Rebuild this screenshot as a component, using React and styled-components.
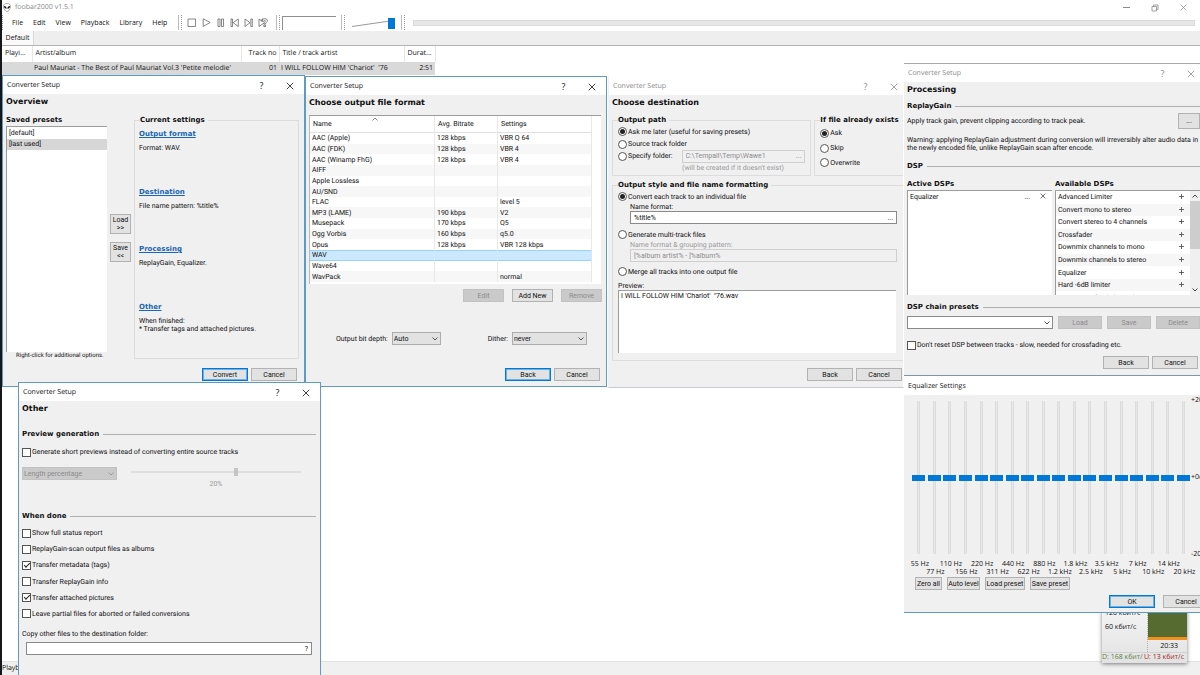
import React from "react";
import styled, { createGlobalStyle, css } from "styled-components";

const ui = '"Open Sans", "Noto Sans", sans-serif';
const dialog = 'Roboto, "Liberation Sans", sans-serif';
const strong = '"DejaVu Sans", "Open Sans", sans-serif';

const face = "#f0f0f0";
const blue = "#0078d7";

const GlobalStyle = createGlobalStyle`
  *, *::before, *::after { box-sizing: border-box; }
  html, body { margin: 0; height: 100%; overflow: hidden; background: #fff; }
  body { font: 7px/8px ${dialog}; color: #111; text-rendering: geometricPrecision; }
  button, input, select, textarea { font: inherit; color: inherit; margin: 0; border-radius: 0; }
  fieldset, ul, h1, h2, p { margin: 0; padding: 0; }
  ul { list-style: none; }
`;

/* ---------- desktop and player window ---------- */

const Desktop = styled.div`
  position: relative;
  height: 100vh;
  overflow: hidden;
`;

const Player = styled.main`
  height: 100%;
  display: flex;
  flex-direction: column;
  border-left: 2px solid #14171c;
  font-family: ${ui};
`;

const PlayerTitle = styled.header`
  display: flex;
  align-items: center;
  height: 14px;
  padding: 1px 12px 0 1px;
  gap: 4px;
  color: #8a8a8a;
`;

const Spacer = styled.span`
  flex: 1;
`;

const CaptionButtons = styled.div`
  display: flex;
  gap: 20px;
`;

const CaptionButton = styled.button`
  display: flex;
  align-items: center;
  justify-content: center;
  width: 9px;
  height: 9px;
  padding: 0;
  border: 0;
  background: none;
  font-family: ${ui};
  font-size: 9px;
  color: ${(p) => (p.$dim ? "#8a8a8a" : "#111")};
`;

const ToolRow = styled.div`
  display: flex;
  align-items: center;
  height: 17px;
`;

const Grip = styled.span`
  width: ${(p) => (p.$double ? "4px" : "1px")};
  height: 15px;
  border-right: 1px dotted #9a9a9a;
  border-left: ${(p) => (p.$double ? "1px solid #bdbdbd" : "0")};
`;

const Menu = styled.nav`
  display: flex;
  gap: 10px;
  width: 175px;
  padding-left: 9px;
`;

const MenuItem = styled.button`
  padding: 0;
  border: 0;
  background: none;
`;

const Transport = styled.div`
  display: flex;
  gap: 5px;
  width: 94px;
  padding-left: 5px;
`;

const IconButton = styled.button`
  display: flex;
  padding: 0;
  border: 0;
  background: none;
`;

const SpectrumBox = styled.div`
  width: 54px;
  height: 14px;
  margin: 0 5px 0 2px;
  border-top: 1px solid #8f8f8f;
  border-left: 1px solid #8f8f8f;
`;

const VolumeBox = styled.div`
  display: flex;
  width: 56px;
  padding-left: 7px;
`;

const SeekBar = styled.div`
  flex: 1;
  height: 6px;
  margin: 0 5px 0 8px;
  background: #e7e7e7;
  border: 1px solid #dadada;
`;

const TabStrip = styled.div`
  display: flex;
  height: 15px;
  background: #eee;
  border-bottom: 1px solid #b4b4b4;
`;

const Tab = styled.button`
  width: 32px;
  padding: 0;
  border: 0;
  border-right: 1px solid #d9d9d9;
  background: #fafafa;
`;

const Playlist = styled.table`
  table-layout: fixed;
  width: 433px;
  border-collapse: collapse;
  white-space: nowrap;

  th, td {
    overflow: hidden;
    padding: 0 3px;
    font-weight: 400;
    text-align: left;
  }
  th { height: 16px; border-right: 1px solid #e6e6e6; }
  td { height: 13px; background: #d9d9d9; padding: 0 2px; }
  th:nth-child(3), td:nth-child(3), td:nth-child(5) { text-align: right; padding: 0 2px; }
`;

const StatusBar = styled.footer`
  margin-top: auto;
  height: 14px;
  line-height: 14px;
  background: ${face};
  border-top: 1px solid #e0e0e0;
`;

/* ---------- dialog parts ---------- */

const Window = styled.section`
  position: absolute;
  z-index: ${(p) => p.$z || 1};
  left: ${(p) => p.$x}px;
  top: ${(p) => p.$y}px;
  ${(p) => (p.$w ? `width: ${p.$w}px;` : "right: 0;")}
  height: ${(p) => p.$h}px;
  display: flex;
  flex-direction: column;
  overflow: hidden;
  background: ${face};
  border: 1px solid #5c9cc4;
  ${(p) => p.$frame === "none" && css`border-color: #fff #fff #c4ccd2 #eef2f4;`}
  ${(p) => p.$frame === "grey" && css`
    border-width: 1px 0 2px;
    border-color: #a8a8a8 #fff #8496a2;
  `}
  ${(p) => p.$frame === "bottom" && css`border-width: 1px 0 1px; border-top-color: #fff;`}
`;

const TitleBar = styled.header`
  display: flex;
  flex: none;
  align-items: center;
  height: 18px;
  padding: 1px ${(p) => (p.$tight ? 5 : 10)}px 0 4px;
  background: #fff;
  font-family: ${ui};
  color: ${(p) => (p.$dim ? "#8a8a8a" : "#111")};
`;

const DialogButtons = styled(CaptionButtons)`
  gap: 19px;
`;

const Body = styled.div`
  flex: 1;
  display: flex;
  flex-direction: column;
  padding: 0 ${(p) => p.$pr ?? 4}px 0 3px;
`;

const Heading = styled.h1`
  font: 700 8px/16px ${strong};
  height: ${(p) => p.$h || 18}px;
`;

const Label = styled.h2`
  font: 700 7px/10px ${strong};
`;

const RuledLabel = styled(Label)`
  display: flex;
  align-items: center;
  gap: 4px;
  white-space: nowrap;
  &::after { content: ""; flex: 1; height: 1px; background: #b0b0b0; }
`;

const Group = styled.fieldset`
  min-width: 0;
  border: 1px solid #dcdcdc;
  height: ${(p) => p.$h}px;
  padding: 0 5px;
  ${(p) => p.$w && `width: ${p.$w}px;`}
  ${(p) => p.$open && "border-right: 0;"}
`;

const Legend = styled.legend`
  padding: 0 3px 0 0;
  font: 700 7px/10px ${strong};
  white-space: nowrap;
`;

const Row = styled.div`
  display: flex;
  align-items: ${(p) => p.$align || "center"};
  justify-content: ${(p) => p.$justify || "flex-start"};
  gap: ${(p) => p.$gap || 0}px;
  ${(p) => p.$h && `height: ${p.$h}px;`}
  padding-left: ${(p) => p.$pl || 0}px;
  padding-right: ${(p) => p.$pr || 0}px;
`;

const Column = styled.div`
  display: flex;
  flex-direction: column;
  min-width: 0;
  ${(p) => (p.$w ? `width: ${p.$w}px;` : "flex: 1;")}
  padding-top: ${(p) => p.$pt || 0}px;
`;

const Button = styled.button`
  flex: none;
  width: ${(p) => p.$w || 46}px;
  height: ${(p) => p.$h || 13}px;
  padding: 0;
  background: #e2e2e2;
  border: 1px solid #b2b2b2;
  white-space: nowrap;
  ${(p) => p.$primary && css`border-color: ${blue}; box-shadow: inset 0 0 0 1px #6fb0e4;`}
  &:disabled { background: #cacaca; border-color: #c2c2c2; color: #8b8b8b; }
`;

const Footer = styled.footer`
  display: flex;
  justify-content: flex-end;
  gap: 3px;
  margin-top: auto;
  padding: 0 ${(p) => p.$pr || 0}px ${(p) => p.$pb ?? 5}px 0;
`;

const ListBox = styled.ul`
  flex: none;
  height: ${(p) => p.$h}px;
  padding: 1px 0;
  overflow: hidden;
  background: #fff;
  border-top: 1px solid #9c9c9c;
  border-left: 1px solid #9c9c9c;
`;

const ListItem = styled.li`
  height: 11px;
  padding: 0 2px;
  line-height: 11px;
  background: ${(p) => (p.$selected ? "#d6d6d6" : "transparent")};
`;

const Note = styled.p`
  line-height: ${(p) => p.$lh || 8}px;
  color: ${(p) => (p.$dim ? "#9a9a9a" : "inherit")};
  text-align: ${(p) => p.$align || "left"};
  padding-left: ${(p) => p.$pl || 0}px;
  white-space: nowrap;
`;

const SmallNote = styled(Note)`
  font-size: 6px;
`;

const Setting = styled.div`
  flex: 1;
  a { display: block; font: 700 7px/10px ${strong}; color: #1a66b0; margin-bottom: 5px; }
`;

const SettingList = styled.div`
  display: flex;
  flex-direction: column;
  height: 234px;
  padding-top: 4px;
  margin-left: -1px;
`;

const Option = styled.label`
  display: flex;
  align-items: center;
  gap: 1px;
  height: ${(p) => p.$h || 12}px;
  white-space: nowrap;
`;

const Tick = styled.input`
  appearance: none;
  flex: none;
  display: grid;
  place-items: center;
  width: 9px;
  height: 9px;
  background: #fff;
  border: 1px solid #555;
  &[type="radio"] { border-radius: 50%; }
  &[type="radio"]:checked::before {
    content: "";
    width: 5px;
    height: 5px;
    border-radius: 50%;
    background: #222;
  }
  &[type="checkbox"]:checked::before {
    content: "";
    width: 6px;
    height: 3px;
    margin-bottom: 2px;
    border: solid #222;
    border-width: 0 0 1px 1px;
    transform: rotate(-45deg);
  }
`;

const Field = styled.div`
  display: flex;
  align-items: center;
  height: ${(p) => p.$h || 13}px;
  width: ${(p) => (p.$w ? `${p.$w}px` : "auto")};
  margin: 0 ${(p) => p.$mr || 0}px 0 ${(p) => p.$ml || 0}px;
  padding: 0 3px;
  background: ${(p) => (p.$dim ? face : "#fff")};
  border: 1px solid ${(p) => (p.$dim ? "#cfcfcf" : "#8a8a8a")};
  color: ${(p) => (p.$dim ? "#8b8b8b" : "inherit")};
`;

const TextInput = styled.input`
  flex: 1;
  min-width: 0;
  height: 9px;
  padding: 0;
  border: 0;
  outline: 0;
  background: none;
`;

const PlainButton = styled.button`
  padding: 0;
  border: 0;
  background: none;
`;

const PreviewText = styled.textarea`
  display: block;
  width: 278px;
  height: 63px;
  padding: 1px 2px;
  resize: none;
  outline: 0;
  background: #fff;
  border: 0;
  border-top: 1px solid #9c9c9c;
  border-left: 1px solid #9c9c9c;
`;

const SelectBox = styled.span`
  display: grid;
  flex: none;
  align-items: center;
  width: ${(p) => p.$w}px;
  height: 13px;
  background: ${(p) => p.$fill || "#e2e2e2"};
  border: 1px solid ${(p) => p.$edge || "#adadad"};
  color: ${(p) => (p.$dim ? "#8b8b8b" : "inherit")};

  select, svg { grid-area: 1 / 1; }
  select {
    appearance: none;
    width: 100%;
    height: 11px;
    padding: 0 1px;
    border: 0;
    background: none;
    opacity: 1;
  }
  svg { justify-self: end; margin-right: 2px; pointer-events: none; }
`;

const FormatBox = styled.div`
  height: 169px;
  width: 292px;
  background: #fff;
  border-top: 1px solid #9c9c9c;
  border-left: 1px solid #b8b8b8;
`;

const FormatTable = styled.table`
  table-layout: fixed;
  width: 282px;
  height: 166px;
  border-collapse: separate;
  border-spacing: 0;

  th, td {
    padding: 0 2px;
    font-weight: 400;
    text-align: left;
    border-right: 1px solid #e8e8e8;
    white-space: nowrap;
    overflow: hidden;
  }
  th { position: relative; height: 17px; padding: 0 3px; border-bottom: 1px solid #e0e0e0; }
  th svg { position: absolute; top: 1px; left: 50%; }
  tbody tr:nth-child(even) td { background: #f7f7f7; }
  tbody tr[aria-selected="true"] td {
    background: #cce8ff;
    box-shadow: inset 0 1px #99d1ff, inset 0 -1px #99d1ff;
    border-right-color: #cce8ff;
  }
`;

const DspBox = styled.div`
  display: flex;
  height: 105px;
  overflow: hidden;
  background: #fff;
  border-top: 1px solid #9c9c9c;
  border-left: 1px solid #9c9c9c;
`;

const DspItems = styled.ul`
  flex: 1;
  display: grid;
  grid-template-rows: repeat(9, 1fr);
  height: 113px;
  li {
    display: flex;
    align-items: center;
    justify-content: space-between;
    padding: 0 6px 0 2px;
  }
  li:nth-child(even) { background: #f6f6f6; }
`;

const ScrollBar = styled.div`
  display: flex;
  flex-direction: column;
  align-items: center;
  width: 10px;
  background: ${face};
  svg { flex: none; margin: 3px 0; }
`;

const ScrollThumb = styled.div`
  width: 100%;
  height: 48px;
  background: #cdcdcd;
`;

const Track = styled.input`
  appearance: none;
  display: block;
  width: 170px;
  height: 8px;
  background: none;
  &::-webkit-slider-runnable-track { height: 2px; background: #dedede; }
  &::-webkit-slider-thumb {
    appearance: none;
    width: 4px;
    height: 8px;
    margin-top: -3px;
    background: #c4c4c4;
  }
`;

const Bands = styled.div`
  display: flex;
  width: 280px;
`;

const Band = styled.label`
  flex: 1;
  min-width: 0;
  display: flex;
  flex-direction: column;
  align-items: center;
  font-family: ${ui};
  white-space: nowrap;
  span { padding-top: ${(p) => (p.$low ? 15 : 7)}px; height: 23px; padding-left: 2px; }
`;

const BandSlider = styled.input`
  appearance: none;
  writing-mode: vertical-lr;
  direction: rtl;
  width: 13px;
  height: 153px;
  background: none;
  &::-webkit-slider-runnable-track {
    width: 3px;
    background: #e7e7e7;
    border: solid #dcdcdc;
    border-width: 0 1px;
  }
  &::-webkit-slider-thumb {
    appearance: none;
    width: 13px;
    height: 6px;
    margin-left: -6px;
    background: ${blue};
  }
`;

const Scale = styled.div`
  display: flex;
  flex-direction: column;
  justify-content: space-between;
  height: 162px;
  margin-top: -4px;
  font-family: ${ui};
  white-space: nowrap;
`;

const Traffic = styled.aside`
  position: absolute;
  left: 1102px;
  top: 608px;
  width: 85px;
  display: grid;
  grid-template-columns: 45px 40px;
  background: linear-gradient(#f4f4f4, #e2e2e2);
  box-shadow: 0 1px 4px rgba(0, 0, 0, 0.5);
  font-family: ${ui};
`;

const TrafficScale = styled.div`
  display: flex;
  flex-direction: column;
  gap: 6px;
  padding: 2px 0 0 3px;
  height: 44px;
  white-space: nowrap;
`;

const TrafficGraph = styled.div`
  height: 44px;
  text-align: right;
  padding-right: 9px;
  line-height: 13px;
  border-left: 1px dotted #b0b0b0;
  &::before {
    content: "";
    display: block;
    height: 32px;
    margin-right: -9px;
    background: #556b2f;
    border-bottom: 3px solid #f09020;
  }
`;

const TrafficTotals = styled.div`
  grid-column: 1 / 3;
  display: flex;
  gap: 1px;
  height: 11px;
  line-height: 10px;
  overflow: hidden;
  white-space: nowrap;
  border-top: 1px solid #d0d0d0;
  span { color: #5f7f45; width: 41px; overflow: hidden; }
  span + span { color: #9c1c1c; }
`;

/* ---------- drawings ---------- */

const Chevron = ({ color = "#555" }) => (
  <svg width="6" height="4" viewBox="0 0 6 4" fill="none" stroke={color}>
    <path d="M0.5 0.5L3 3L5.5 0.5" />
  </svg>
);

const ChevronUp = ({ color = "#444" }) => (
  <svg width="6" height="4" viewBox="0 0 6 4" fill="none" stroke={color}>
    <path d="M0.5 3.5L3 1L5.5 3.5" />
  </svg>
);

const Cross = ({ size = 8 }) => (
  <svg width={size} height={size} viewBox="0 0 8 8" fill="none" stroke="currentColor" strokeWidth="0.8">
    <path d="M0.8 0.8L7.2 7.2M7.2 0.8L0.8 7.2" />
  </svg>
);

const Alien = () => (
  <svg width="8" height="9" viewBox="0 0 8 9">
    <path d="M4 0.4C6.3 0.4 7.7 1.6 7.6 3.6C7.5 5.8 5.6 8.6 4 8.6S0.5 5.8 0.4 3.6C0.3 1.6 1.7 0.4 4 0.4Z" fill="#fff" stroke="#777" strokeWidth="0.6" />
    <path d="M0.9 3C2.6 3 3.6 4 3.6 5.7C2 5.7 1 4.8 0.9 3ZM7.1 3C5.4 3 4.4 4 4.4 5.7C6 5.7 7 4.8 7.1 3Z" fill="#111" />
  </svg>
);

const transport = [
  ["Stop", 10, <path d="M1 1H8.5V8.5H1Z" />],
  ["Play", 9, <path d="M1.2 0.8L8.2 4.5L1.2 8.4Z" />],
  ["Pause", 9, <path d="M2 1H4V8.5H2ZM5.5 1H7.5V8.5H5.5Z" />],
  ["Previous", 9, <path d="M1 1H2.5V8.5H1ZM8.3 1V8.5L3.2 4.7Z" />],
  ["Next", 9, <path d="M6.8 1H8.3V8.5H6.8ZM1 1V8.5L6 4.7Z" />],
  ["Random", 11, <path d="M1 1L4 3.3V1H5M1 1V8.5L6 5M4 3.3C4 1.4 5 0.7 6.7 0.7C8.6 0.7 9.6 1.6 9.4 3C9.2 4.2 7.6 4.6 7.5 6H5.8C5.8 4.5 7.4 3.8 7.3 2.9C7.2 2.2 5.9 2.3 5.8 3.3ZM5.8 7H7.5V8.6H5.8Z" />],
];

/* ---------- composed controls ---------- */

const DialogTitle = ({ children, dim, tight }) => (
  <TitleBar $dim={dim} $tight={tight}>
    {children}
    <Spacer />
    <DialogButtons>
      <CaptionButton $dim={dim} aria-label="Help">?</CaptionButton>
      <CaptionButton $dim={dim} aria-label="Close"><Cross /></CaptionButton>
    </DialogButtons>
  </TitleBar>
);

const Choice = ({ type = "checkbox", name, checked, h, children }) => (
  <Option $h={h}>
    <Tick type={type} name={name} defaultChecked={checked} />
    {children}
  </Option>
);

const Select = ({ label, value, w, fill, edge, dim }) => (
  <SelectBox $w={w} $fill={fill} $edge={edge} $dim={dim}>
    <select aria-label={label} defaultValue={value} disabled={dim}>
      <option>{value}</option>
    </select>
    <Chevron color={dim ? "#9a9a9a" : "#555"} />
  </SelectBox>
);

const Pad = styled.div`
  flex: none;
  height: ${(p) => p.$h}px;
`;

/* ---------- dialogs ---------- */

const settings = [
  ["Output format", ["Format: WAV."]],
  ["Destination", ["File name pattern: %title%"]],
  ["Processing", ["ReplayGain, Equalizer."]],
  ["Other", ["When finished:", "* Transfer tags and attached pictures."]],
];

const OverviewDialog = () => (
  <Window $x={2} $y={75} $w={303} $h={312}>
    <DialogTitle>Converter Setup</DialogTitle>
    <Body $pr={5}>
      <Heading $h={21}>Overview</Heading>
      <Row $align="flex-start" $h={246}>
        <Column $w={101}>
          <Label>Saved presets</Label>
          <Pad $h={1} />
          <ListBox $h={226}>
            <ListItem>[default]</ListItem>
            <ListItem $selected>[last used]</ListItem>
          </ListBox>
          <SmallNote $pl={10}>Right-click for additional options.</SmallNote>
        </Column>
        <Row $w={21} $pl={3} $pr={3}>
          <Column $w={21} $pt={99}>
            <Button $w={21} $h={20}>Load<br />&gt;&gt;</Button>
            <Pad $h={8} />
            <Button $w={21} $h={20}>Save<br />&lt;&lt;</Button>
          </Column>
        </Row>
        <Group $w={165} $h={244}>
          <Legend>Current settings</Legend>
          <SettingList>
            {settings.map(([title, lines]) => (
              <Setting key={title}>
                <a href="#">{title}</a>
                {lines.map((l) => <Note key={l}>{l}</Note>)}
              </Setting>
            ))}
          </SettingList>
        </Group>
      </Row>
      <Footer $pr={2}>
        <Button $primary>Convert</Button>
        <Button>Cancel</Button>
      </Footer>
    </Body>
  </Window>
);

const formats = [
  ["AAC (Apple)", "128 kbps", "VBR Q 64"],
  ["AAC (FDK)", "128 kbps", "VBR 4"],
  ["AAC (Winamp FhG)", "128 kbps", "VBR 4"],
  ["AIFF", "", ""],
  ["Apple Lossless", "", ""],
  ["AU/SND", "", ""],
  ["FLAC", "", "level 5"],
  ["MP3 (LAME)", "190 kbps", "V2"],
  ["Musepack", "170 kbps", "Q5"],
  ["Ogg Vorbis", "160 kbps", "q5.0"],
  ["Opus", "128 kbps", "VBR 128 kbps"],
  ["WAV", "", ""],
  ["Wave64", "", ""],
  ["WavPack", "", "normal"],
];

const FormatDialog = () => (
  <Window $x={305} $y={76} $w={302} $h={311}>
    <DialogTitle>Converter Setup</DialogTitle>
    <Body>
      <Heading $h={20}>Choose output file format</Heading>
      <FormatBox>
        <FormatTable>
          <colgroup><col width="125" /><col width="63" /><col width="94" /></colgroup>
          <thead>
            <tr>
              <th>Name<ChevronUp color="#888" /></th>
              <th>Avg. Bitrate</th>
              <th>Settings</th>
            </tr>
          </thead>
          <tbody>
            {formats.map((f) => (
              <tr key={f[0]} aria-selected={f[0] === "WAV"}>
                {f.map((c, i) => <td key={i}>{c}</td>)}
              </tr>
            ))}
          </tbody>
        </FormatTable>
      </FormatBox>
      <Pad $h={5} />
      <Row $justify="flex-end" $gap={8}>
        <Button $w={41} disabled>Edit</Button>
        <Button $w={41}>Add New</Button>
        <Button $w={41} disabled>Remove</Button>
      </Row>
      <Pad $h={30} />
      <Row $justify="flex-end" $gap={4} $pr={15}>
        <span>Output bit depth:</span>
        <Select label="Output bit depth" value="Auto" w={49} />
        <Row $pl={43}>Dither:</Row>
        <Select label="Dither" value="never" w={75} />
      </Row>
      <Footer $pr={2}>
        <Button $primary>Back</Button>
        <Button>Cancel</Button>
      </Footer>
    </Body>
  </Window>
);

const DestinationDialog = () => (
  <Window $x={608} $y={76} $w={296} $h={312} $frame="none">
    <DialogTitle dim tight>Converter Setup</DialogTitle>
    <Body $pr={0}>
      <Heading $h={20}>Choose destination</Heading>
      <Row $gap={3} $align="flex-start">
        <Group $w={200} $h={61}>
          <Legend>Output path</Legend>
          <Choice type="radio" name="path" checked h={13}>Ask me later (useful for saving presets)</Choice>
          <Choice type="radio" name="path">Source track folder</Choice>
          <Row $h={12} $gap={9}>
            <Choice type="radio" name="path">Specify folder:</Choice>
            <Field $dim $w={128}>
              <TextInput aria-label="Folder" defaultValue={"C:\\Tempall\\Temp\\Wawe1"} disabled />
              <PlainButton aria-label="Browse">...</PlainButton>
            </Field>
          </Row>
          <Note $dim $lh={12} $pl={64}>(will be created if it doesn't exist)</Note>
        </Group>
        <Group $w={89} $h={61} $open>
          <Legend>If file already exists</Legend>
          <Choice type="radio" name="exists" checked h={16}>Ask</Choice>
          <Choice type="radio" name="exists" h={14}>Skip</Choice>
          <Choice type="radio" name="exists" h={15}>Overwrite</Choice>
        </Group>
      </Row>
      <Pad $h={4} />
      <Group $h={181} $open>
        <Legend>Output style and file name formatting</Legend>
        <Choice type="radio" name="style" checked h={13}>Convert each track to an individual file</Choice>
        <Note $pl={12}>Name format:</Note>
        <Field $ml={12} $mr={1}>
          <TextInput aria-label="Name format" defaultValue="%title%" />
          <PlainButton aria-label="Edit format">...</PlainButton>
        </Field>
        <Pad $h={4} />
        <Choice type="radio" name="style" h={13}>Generate multi-track files</Choice>
        <Note $dim $pl={12}>Name format &amp; grouping pattern:</Note>
        <Field $ml={12} $mr={1} $dim>
          <TextInput aria-label="Name format and grouping pattern" defaultValue="[%album artist% - ]%album%" disabled />
        </Field>
        <Pad $h={3} />
        <Choice type="radio" name="style" h={13}>Merge all tracks into one output file</Choice>
        <Pad $h={4} />
        <Note as="label" htmlFor="preview">Preview:</Note>
        <PreviewText id="preview" readOnly defaultValue="I WILL FOLLOW HIM 'Chariot'  ''76.wav" />
      </Group>
      <Footer $pr={1} $pb={6}>
        <Button>Back</Button>
        <Button>Cancel</Button>
      </Footer>
    </Body>
  </Window>
);

const dsps = [
  "Advanced Limiter", "Convert mono to stereo", "Convert stereo to 4 channels", "Crossfader",
  "Downmix channels to mono", "Downmix channels to stereo", "Equalizer", "Hard -6dB limiter",
  "Meier crossfeed channel",
];

const ProcessingDialog = () => (
  <Window $x={904} $y={63} $h={314} $frame="grey">
    <DialogTitle dim tight>Converter Setup</DialogTitle>
    <Body $pr={0}>
      <Heading $h={19}>Processing</Heading>
      <RuledLabel>ReplayGain</RuledLabel>
      <Pad $h={1} />
      <Row $h={18} $justify="space-between">
        Apply track gain, prevent clipping according to track peak.
        <Button $w={22} $h={16}>...</Button>
      </Row>
      <Pad $h={6} />
      <Note>Warning: applying ReplayGain adjustment during conversion will irreversibly alter audio data in<br />the newly encoded file, unlike ReplayGain scan after encode.</Note>
      <Pad $h={9} />
      <RuledLabel>DSP</RuledLabel>
      <Pad $h={8} />
      <Row $gap={3} $align="flex-start">
        <Column $w={145}>
          <Label>Active DSPs</Label>
          <Pad $h={1} />
          <DspBox>
            <DspItems>
              <li>
                Equalizer
                <Row $gap={10}>
                  <PlainButton>...</PlainButton>
                  <PlainButton aria-label="Remove Equalizer"><Cross size={6} /></PlainButton>
                </Row>
              </li>
            </DspItems>
          </DspBox>
        </Column>
        <Column>
          <Label>Available DSPs</Label>
          <Pad $h={1} />
          <DspBox>
            <DspItems>
              {dsps.map((d) => (
                <li key={d}>{d}<PlainButton aria-label={`Add ${d}`}>
                  <svg width="5" height="5" viewBox="0 0 5 5" stroke="#444" strokeWidth="0.8"><path d="M0 2.5H5M2.5 0V5" /></svg>
                </PlainButton></li>
              ))}
            </DspItems>
            <ScrollBar>
              <ChevronUp />
              <ScrollThumb />
              <Spacer />
              <Chevron color="#444" />
            </ScrollBar>
          </DspBox>
        </Column>
      </Row>
      <Pad $h={7} />
      <RuledLabel>DSP chain presets</RuledLabel>
      <Pad $h={4} />
      <Row $gap={5}>
        <Select label="DSP chain presets" value="" w={146} fill="#fff" edge="#8a8a8a" />
        <Button $w={44} disabled>Load</Button>
        <Button $w={44} disabled>Save</Button>
        <Button $w={44} disabled>Delete</Button>
      </Row>
      <Pad $h={10} />
      <Choice>Don't reset DSP between tracks - slow, needed for crossfading etc.</Choice>
      <Footer $pr={2} $pb={6}>
        <Button>Back</Button>
        <Button>Cancel</Button>
      </Footer>
    </Body>
  </Window>
);

const bands = [
  "55 Hz", "77 Hz", "110 Hz", "156 Hz", "220 Hz", "311 Hz", "440 Hz", "622 Hz", "880 Hz",
  "1.2 kHz", "1.8 kHz", "2.5 kHz", "3.5 kHz", "5 kHz", "7 kHz", "10 kHz", "14 kHz", "20 kHz",
];

const EqualizerDialog = () => (
  <Window $x={904} $y={376} $h={237} $frame="bottom">
    <TitleBar>Equalizer Settings</TitleBar>
    <Body $pr={0}>
      <Pad $h={6} />
      <Row $align="flex-start" $pl={4}>
        <Bands>
          {bands.map((b, i) => (
            <Band key={b} $low={i % 2 === 1}>
              <BandSlider type="range" min="-20" max="20" defaultValue="0" />
              <span>{b}</span>
            </Band>
          ))}
        </Bands>
        <Scale><span>+20dB</span><span>+0dB</span><span>-20dB</span></Scale>
      </Row>
      <Row $gap={5} $pl={8}>
        <Button $w={27}>Zero all</Button>
        <Button $w={33}>Auto level</Button>
        <Button $w={40}>Load preset</Button>
        <Button $w={40}>Save preset</Button>
      </Row>
      <Pad $h={5} />
      <Row $gap={8} $pl={202}>
        <Button $primary>OK</Button>
        <Button>Cancel</Button>
      </Row>
    </Body>
  </Window>
);

const doneOptions = [
  ["Show full status report", false],
  ["ReplayGain-scan output files as albums", false],
  ["Transfer metadata (tags)", true],
  ["Transfer ReplayGain info", false],
  ["Transfer attached pictures", true],
  ["Leave partial files for aborted or failed conversions", false],
];

const OptionStack = styled.div`
  display: flex;
  flex-direction: column;
  justify-content: space-between;
  height: 93px;
`;

const OtherDialog = () => (
  <Window $x={18} $y={382} $w={303} $h={311} $z={3}>
    <DialogTitle>Converter Setup</DialogTitle>
    <Body>
      <Heading $h={28}>Other</Heading>
      <RuledLabel>Preview generation</RuledLabel>
      <Pad $h={7} />
      <Choice>Generate short previews instead of converting entire source tracks</Choice>
      <Pad $h={9} />
      <Row $align="flex-start" $gap={14}>
        <Select label="Preview length mode" value="Length percentage" w={95} dim fill="#cacaca" edge="#c2c2c2" />
        <Column $w={170} $pt={1}>
          <Track type="range" aria-label="Preview length" defaultValue="62" disabled />
          <Note $dim $align="center" $lh={16}>20%</Note>
        </Column>
      </Row>
      <Pad $h={19} />
      <RuledLabel>When done</RuledLabel>
      <Pad $h={6} />
      <OptionStack>
        {doneOptions.map(([t, on]) => <Choice key={t} checked={on}>{t}</Choice>)}
      </OptionStack>
      <Pad $h={10} />
      <Note as="label" htmlFor="copy">Copy other files to the destination folder:</Note>
      <Pad $h={4} />
      <Field $ml={4} $mr={4}>
        <TextInput id="copy" />
        <PlainButton aria-label="Folder syntax help">?</PlainButton>
      </Field>
    </Body>
  </Window>
);

export default function App() {
  return (
    <Desktop>
      <GlobalStyle />
      <Player>
        <PlayerTitle>
          <Alien />
          foobar2000 v1.5.1
          <Spacer />
          <CaptionButtons>
            <CaptionButton $dim aria-label="Minimize">
              <svg width="8" height="8" viewBox="0 0 8 8" stroke="currentColor"><path d="M1 3.5H8" /></svg>
            </CaptionButton>
            <CaptionButton $dim aria-label="Restore">
              <svg width="8" height="8" viewBox="0 0 8 8" fill="none" stroke="currentColor" strokeWidth="0.8">
                <path d="M1 2.5H5.5V7H1ZM2.5 2.5V1H7V5.5H5.5" />
              </svg>
            </CaptionButton>
            <CaptionButton $dim aria-label="Close"><Cross size={7} /></CaptionButton>
          </CaptionButtons>
        </PlayerTitle>
        <ToolRow>
          <Grip />
          <Menu>
            {["File", "Edit", "View", "Playback", "Library", "Help"].map((m) => (
              <MenuItem key={m}>{m}</MenuItem>
            ))}
          </Menu>
          <Grip $double />
          <Transport>
            {transport.map(([name, w, shape]) => (
              <IconButton key={name} aria-label={name}>
                <svg width={w} height="10" viewBox={`0 0 ${w} 10`} fill="none" stroke="#555" strokeWidth="0.7">{shape}</svg>
              </IconButton>
            ))}
          </Transport>
          <Grip $double />
          <SpectrumBox />
          <Grip $double />
          <VolumeBox>
            <svg width="46" height="12" viewBox="0 0 46 12">
              <path d="M0 9.5L38 4" stroke="#999" fill="none" />
              <rect x="36" y="1" width="7" height="11" fill={blue} />
            </svg>
          </VolumeBox>
          <Grip $double />
          <SeekBar />
        </ToolRow>
        <TabStrip><Tab>Default</Tab></TabStrip>
        <Playlist>
          <colgroup>
            <col width="30" /><col width="209" /><col width="38" /><col width="125" /><col width="31" />
          </colgroup>
          <thead>
            <tr><th>Playi...</th><th>Artist/album</th><th>Track no</th><th>Title / track artist</th><th>Durat...</th></tr>
          </thead>
          <tbody>
            <tr>
              <td />
              <td>Paul Mauriat - The Best of Paul Mauriat Vol.3 'Petite melodie'</td>
              <td>01</td>
              <td>I WILL FOLLOW HIM 'Chariot'&nbsp; '76</td>
              <td>2:51</td>
            </tr>
          </tbody>
        </Playlist>
        <StatusBar>Playback stopped.</StatusBar>
      </Player>
      <Traffic>
        <TrafficScale><span>120 кбит/с</span><span>60 кбит/с</span></TrafficScale>
        <TrafficGraph>20:33</TrafficGraph>
        <TrafficTotals><span>D: 168 кбит/с</span><span>U: 13 кбит/с</span></TrafficTotals>
      </Traffic>
      <OverviewDialog />
      <FormatDialog />
      <DestinationDialog />
      <ProcessingDialog />
      <EqualizerDialog />
      <OtherDialog />
    </Desktop>
  );
}
